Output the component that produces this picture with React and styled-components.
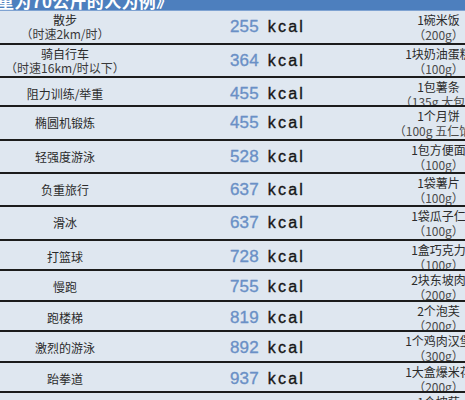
import React from "react";
import styled, { createGlobalStyle } from "styled-components";

const GlobalStyle = createGlobalStyle`
    html, body {
        margin: 0;
        padding: 0;
        overflow: hidden;
        background: #dfe7f0;
    }
    body {
        font-family: "Noto Sans CJK SC", "Noto Sans", sans-serif;
    }
`;

const Page = styled.div`
    width: 480px;
    display: flex;
    flex-direction: column;
`;

// only the lower half of the title is left in the crop
const TitleBar = styled.div`
    height: 11px;
    overflow: hidden;
    background: #4d7fbe;
    border-bottom: 1px solid #7fa3d2;
    box-sizing: border-box;
`;

const Title = styled.div`
    margin-top: -9px;
    margin-left: -3px;
    font-size: 17px;
    line-height: 20px;
    font-weight: 700;
    color: #ffffff;
    white-space: nowrap;
    letter-spacing: 0.3px;
`;

const Row = styled.div`
    display: grid;
    grid-template-columns: 130px 267px 83px;
    height: ${(p) => p.h}px;
    box-sizing: border-box;
    border-bottom: 2px solid #1c1c1c;
    background: #dfe7f0;
    overflow: hidden;
`;

const Activity = styled.div`
    display: flex;
    flex-direction: column;
    justify-content: center;
    align-items: center;
    font-size: 12px;
    line-height: 14px;
    color: #2b2b2b;
    white-space: nowrap;
`;

const Note = styled.span`
    color: #3a3a3a;
`;

const Energy = styled.div`
    display: flex;
    align-items: center;
    justify-content: center;
    padding-left: 8px;
    gap: 9px;
    font-family: "Liberation Sans", "DejaVu Sans", sans-serif;
    font-size: 17px;
    -webkit-text-stroke: 0.35px currentColor;
`;

const Value = styled.span`
    color: #6a90c6;
    letter-spacing: 0.2px;
`;

const Unit = styled.span`
    color: #161616;
    font-size: 16px;
    letter-spacing: 2.2px;
`;

const Food = styled.div`
    display: flex;
    flex-direction: column;
    align-items: center;
    justify-content: ${(p) => (p.top ? "flex-start" : "center")};
    padding-top: ${(p) => (p.top ? "1px" : "0")};
    font-size: 12px;
    line-height: 15px;
    color: #2b2b2b;
    white-space: nowrap;
`;

const Weight = styled.span`
    color: #4a4a4a;
`;

const rows = [
    { h: 34, name: "散步", note: "（时速2km/时）", kcal: 255, food: "1碗米饭", weight: "（200g）" },
    { h: 33, name: "骑自行车", note: "（时速16km/时以下）", kcal: 364, food: "1块奶油蛋糕", weight: "（100g）" },
    { h: 29, name: "阻力训练/举重", kcal: 455, food: "1包薯条", weight: "（135g 大包）", top: true },
    { h: 34, name: "椭圆机锻炼", kcal: 455, food: "1个月饼", weight: "（100g 五仁馅）" },
    { h: 33, name: "轻强度游泳", kcal: 528, food: "1包方便面", weight: "（100g）" },
    { h: 33, name: "负重旅行", kcal: 637, food: "1袋薯片", weight: "（100g）" },
    { h: 34, name: "滑冰", kcal: 637, food: "1袋瓜子仁", weight: "（100g）" },
    { h: 30, name: "打篮球", kcal: 728, food: "1盒巧克力", weight: "（100g）", top: true },
    { h: 31, name: "慢跑", kcal: 755, food: "2块东坡肉", weight: "（200g）", top: true },
    { h: 30, name: "跑楼梯", kcal: 819, food: "2个泡芙", weight: "（200g）", top: true },
    { h: 31, name: "激烈的游泳", kcal: 892, food: "1个鸡肉汉堡", weight: "（300g）", top: true },
    { h: 30, name: "跆拳道", kcal: 937, food: "1大盒爆米花", weight: "（200g）", top: true },
    { h: 30, name: "跳绳", kcal: 1075, food: "1个披萨", weight: "（300g）", top: true },
];

const App = () => {
    return (
        <Page>
            <GlobalStyle />
            <TitleBar>
                <Title>重为70公斤的人为例》</Title>
            </TitleBar>
            {rows.map((r, i) => (
                <Row key={i} h={r.h}>
                    <Activity>
                        <span>{r.name}</span>
                        {r.note && <Note>{r.note}</Note>}
                    </Activity>
                    <Energy>
                        <Value>{r.kcal}</Value>
                        <Unit>kcal</Unit>
                    </Energy>
                    <Food top={r.top}>
                        <span>{r.food}</span>
                        <Weight>{r.weight}</Weight>
                    </Food>
                </Row>
            ))}
        </Page>
    );
};

export default App;
